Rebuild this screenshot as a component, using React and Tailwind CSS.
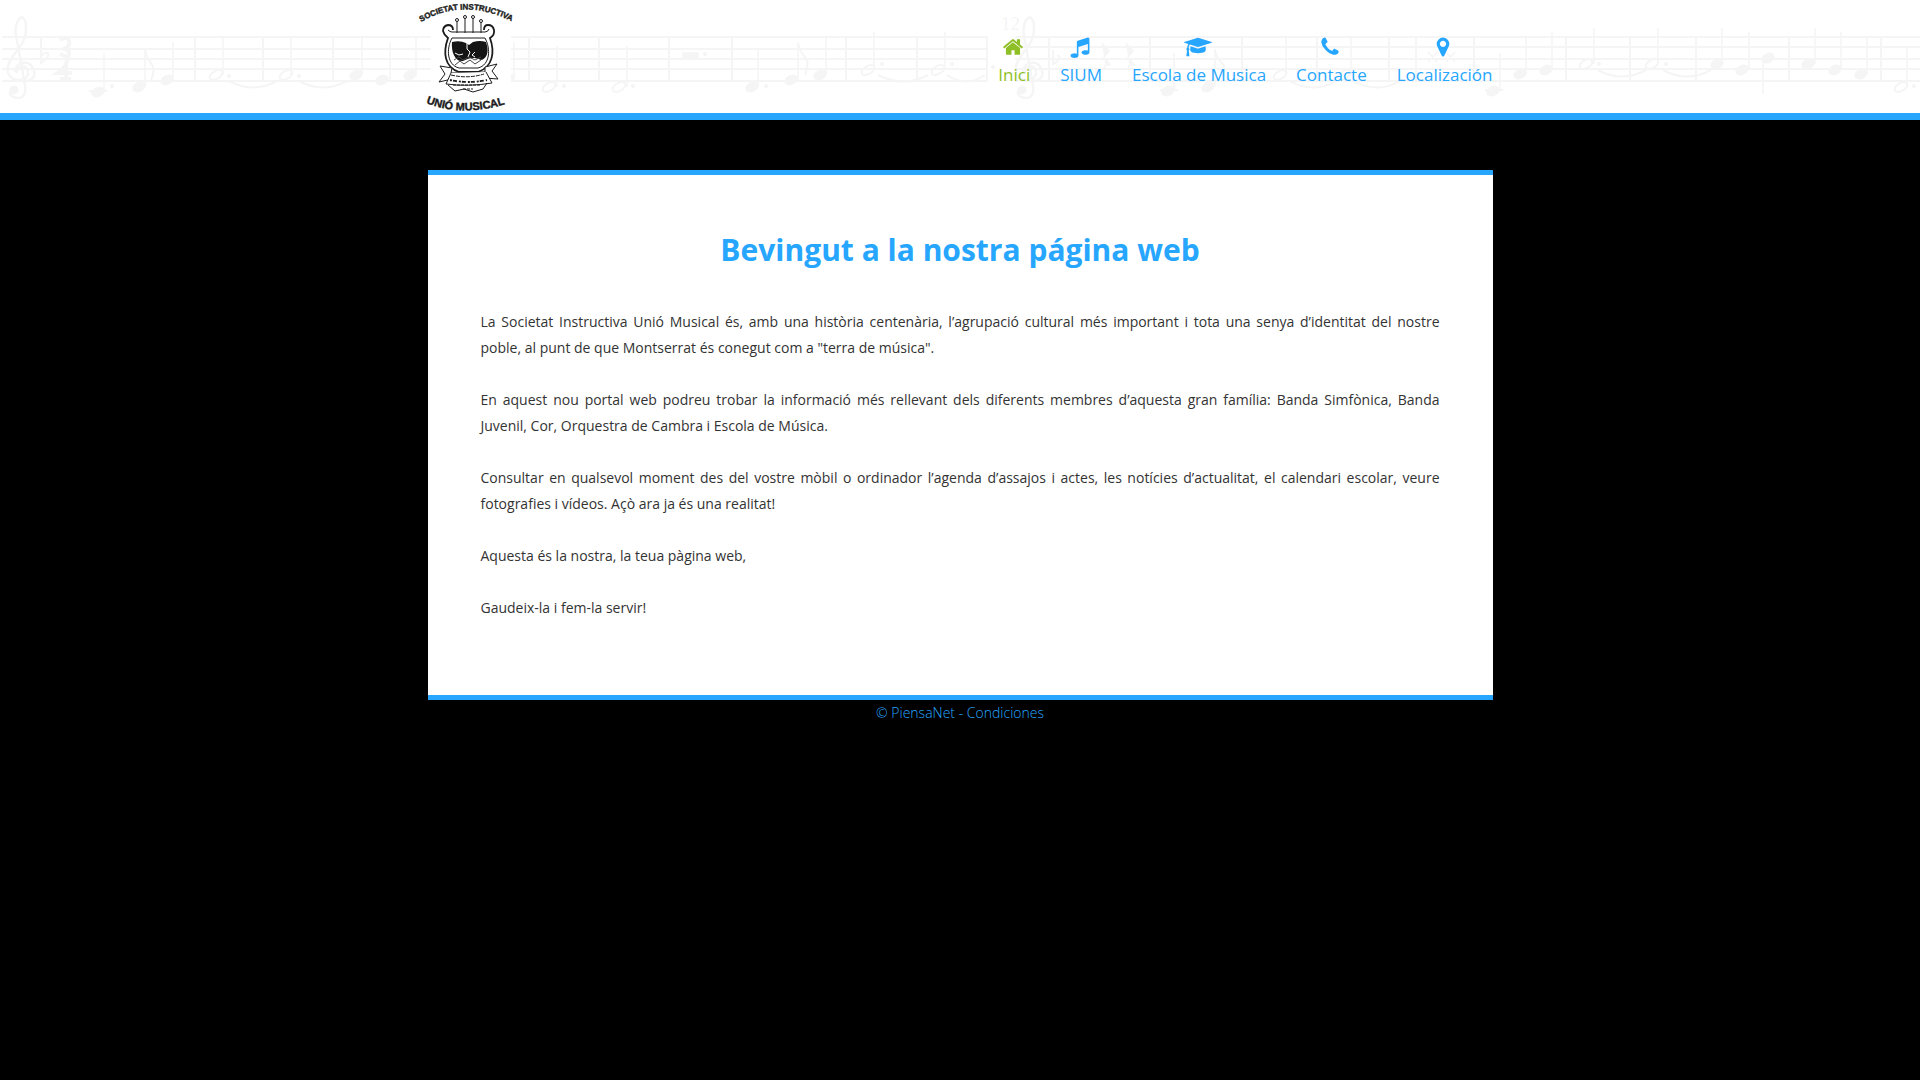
const ICONS = {
  home: {
    box: '0 0 1792 1792',
    size: 'w-[22px]',
    d: 'M1472 992v480q0 26-19 45t-45 19h-384v-384h-256v384h-384q-26 0-45-19t-19-45v-480q0-1 .5-3t.5-3l575-474 575 474q1 2 1 6zm223-69l-62 74q-8 9-21 11h-3q-13 0-21-7l-692-577-692 577q-12 8-24 7-13-2-21-11l-62-74q-8-10-7-23.5t11-21.5l719-599q32-26 76-26t76 26l244 204v-195q0-14 9-23t23-9h192q14 0 23 9t9 23v408l219 182q10 8 11 21.5t-7 23.5z',
  },
  music: {
    box: '0 0 1792 1792',
    size: 'w-[22px]',
    d: 'M1664 224v1120q0 50-34 89t-86 60.5-103.5 32-96.5 10.5-96.5-10.5-103.5-32-86-60.5-34-89 34-89 86-60.5 103.5-32 96.5-10.5q105 0 192 39v-537l-768 237v709q0 50-34 89t-86 60.5-103.5 32-96.5 10.5-96.5-10.5-103.5-32-86-60.5-34-89 34-89 86-60.5 103.5-32 96.5-10.5q105 0 192 39v-967q0-31 19-56.5t49-35.5l832-256q12-4 28-4 40 0 68 28t28 68z',
  },
  cap: {
    box: '0 0 2304 1792',
    size: 'w-7',
    d: 'M1774 836l18 316q4 69-82 128t-235 93.5-323 34.5-323-34.5-235-93.5-82-128l18-316 574 181q22 7 48 7t48-7zm530-324q0 23-22 31l-1120 352q-4 1-10 1t-10-1l-652-206q-43 34-71 111.5t-34 178.5q63 36 63 109 0 69-58 107l58 433q2 14-8 25-9 11-24 11h-192q-15 0-24-11-10-11-8-25l58-433q-58-38-58-107 0-73 65-111 11-207 98-330l-333-104q-22-8-22-31t22-31l1120-352q4-1 10-1t10 1l1120 352q22 8 22 31z',
  },
  phone: {
    box: '0 0 1792 1792',
    size: 'w-[22px]',
    d: 'M1600 1240q0 27-10 70.5t-21 68.5q-21 50-122 106-94 51-186 51-27 0-52.5-3.5t-57.5-12.5-47.5-14.5-55.5-20.5-49-18q-98-35-175-83-128-79-264.5-215.5t-215.5-264.5q-48-77-83-175-3-9-18-49t-20.5-55.5-14.5-47.5-12.5-57.5-3.5-52.5q0-92 51-186 56-101 106-122 25-11 68.5-21t70.5-10q14 0 21 3 18 6 53 76 11 19 30 54t35 63.5 31 53.5q3 4 17.5 25t21.5 35.5 7 28.5q0 20-28.5 50t-62 55-62 53-28.5 46q0 9 5 22.5t8.5 20.5 14 24 11.5 19q76 137 174 235t235 174q2 1 19 11.5t24 14 20.5 8.5 22.5 5q18 0 46-28.5t53-62 55-62 50-28.5q14 0 28.5 7t35.5 21.5 25 17.5q25 15 53.5 31t63.5 35 54 30q70 35 76 53 3 7 3 21z',
  },
  marker: {
    box: '0 0 1792 1792',
    size: 'w-[22px]',
    d: 'M1152 640q0-106-75-181t-181-75-181 75-75 181 75 181 181 75 181-75 75-181zm256 0q0 109-33 179l-364 774q-16 33-47.5 52t-67.5 19-67.5-19-46.5-52l-365-774q-33-70-33-179 0-212 150-362t362-150 362 150 150 362z',
  },
};

const NAV = [
  { label: 'Inici', icon: 'home', active: true },
  { label: 'SIUM', icon: 'music' },
  { label: 'Escola de Musica', icon: 'cap' },
  { label: 'Contacte', icon: 'phone' },
  { label: 'Localización', icon: 'marker' },
];

const PARAGRAPHS = [
  'La Societat Instructiva Unió Musical és, amb una història centenària, l’agrupació cultural més important i tota una senya d’identitat del nostre poble, al punt de que Montserrat és conegut com a "terra de música".',
  'En aquest nou portal web podreu trobar la informació més rellevant dels diferents membres d’aquesta gran família: Banda Simfònica, Banda Juvenil, Cor, Orquestra de Cambra i Escola de Música.',
  'Consultar en qualsevol moment des del vostre mòbil o ordinador l’agenda d’assajos i actes, les notícies d’actualitat, el calendari escolar, veure fotografies i vídeos. Açò ara ja és una realitat!',
  'Aquesta és la nostra, la teua pàgina web,',
  'Gaudeix-la i fem-la servir!',
];

/* Notes: [head x, head y, stem x, stem end y] */
const QUARTERS = [
  [98, 92, 104, 53], [139, 87, 145, 49], [167, 80, 173, 42], [356, 75, 362, 37],
  [382, 80, 390, 42], [410, 75, 416, 37], [508, 79, 514, 42], [752, 87, 758, 49],
  [791, 80, 798, 42], [820, 75, 826, 37], [1168, 91, 1174, 53], [1208, 87, 1215, 49],
  [1493, 91, 1500, 53], [1520, 74, 1526, 37], [1546, 70, 1552, 32], [1717, 64, 1722, 28],
  [1742, 70, 1749, 32], [1768, 58, 1763, 94], [1808, 64, 1815, 28], [1835, 70, 1841, 32],
  [1861, 74, 1867, 37],
];
const HALVES = [
  [216, 75, 223, 37], [286, 75, 291, 37], [549, 87, 557, 46], [619, 87, 627, 46],
  [868, 70, 874, 32], [938, 70, 945, 32], [1280, 75, 1286, 37], [1344, 75, 1351, 37],
  [1586, 64, 1594, 28], [1652, 64, 1658, 28], [1901, 87, 1907, 47],
];
const DOTS = [
  [112, 86], [229, 76], [299, 76], [564, 86], [633, 86], [705, 54], [766, 86], [882, 64],
  [952, 64], [993, 67], [1599, 64], [1666, 64], [1914, 86],
];
const BARS = [195, 263, 333, 529, 599, 669, 732, 846, 917, 987, 1049, 1150, 1242, 1317, 1389, 1416, 1474, 1566, 1630, 1696, 1789, 1881];
const TIES = [
  [229, 81, 48], [299, 81, 48], [878, 75, 50], [947, 75, 38], [1290, 81, 46], [1354, 81, 46],
  [1598, 70, 48], [1663, 70, 48],
];

function Clef({ x }) {
  return (
    <path
      transform={`translate(${x} 0)`}
      d="M-4 73c-1-6 7-9 10-4 3 6-1 11-8 11-8 0-13-6-11-14 3-13 19-20 18-39 0-8-4-12-7-8-5 6-4 14-2 22l8 44c1 8-1 13-7 13-5 0-9-3-8-7M-6 72c0-10 13-13 18-4 4 8-1 13-8 13"
      fill="none"
      strokeWidth="2.4"
    />
  );
}

function Score() {
  return (
    <svg
      aria-hidden="true"
      className="absolute left-0 top-0"
      width="1920"
      height="113"
      viewBox="0 0 1920 113"
      fill="#f5f5f5"
      stroke="#f5f5f5"
    >
      <path d="M2 37H987M2 49H987M2 59H987M2 69H987M2 81H987M1015 37H1920M1015 47H1920M1015 59H1920M1015 69H1920M1015 81H1920" strokeWidth="2" />
      <Clef x={21} />
      <Clef x={1029} />
      <circle cx="14" cy="90" r="4" />
      <circle cx="1022" cy="90" r="4" />
      <path d="M41 38v25c9-5 9-12 4-10l-4 3M1053 50v14c8-4 8-9 4-8" fill="none" strokeWidth="2" />
      <path d="M60 40q7-5 9 1t-6 8q9 1 5 8l-8-3M68 57q-1 10-10 16h14M66 62v17M60 79h11" fill="none" strokeWidth="4" />
      {BARS.map((x) => <path key={x} d={`M${x} 37V81`} strokeWidth="2" />)}
      {[...QUARTERS, ...HALVES].map(([x, y, sx, sy]) => (
        <path key={`${sx}-${sy}`} d={`M${sx} ${y}V${sy}`} strokeWidth="1.6" />
      ))}
      {QUARTERS.map(([x, y]) => (
        <ellipse key={x} cx={x} cy={y} rx="7" ry="5" transform={`rotate(-25 ${x} ${y})`} stroke="none" />
      ))}
      {HALVES.map(([x, y]) => (
        <ellipse key={x} cx={x} cy={y} rx="7" ry="4" transform={`rotate(-30 ${x} ${y})`} fill="none" strokeWidth="2" />
      ))}
      {DOTS.map(([x, y]) => <circle key={x} cx={x} cy={y} r="1.6" />)}
      {TIES.map(([x, y, w]) => (
        <path key={x} d={`M${x} ${y}q${w / 2} 13 ${w} 0`} fill="none" strokeWidth="2" />
      ))}
      <path d="M89 91h18M1160 90h18M1485 90h18" strokeWidth="2" />
      <path d="M145 49q1 8 6 14t0 17M798 44q2 8 7 13t0 18M1215 51q2 8 7 12t0 14" fill="none" strokeWidth="2" />
      <path d="M683 53h15v5h-15zM1102 43l7 8-5 6 6 8q-8-1-4 5M1126 43l7 8-5 6 6 8q-8-1-4 5M1428 52l9 10m0-10-9 10M1446 52l9 10m0-10-9 10" strokeWidth="1.5" />
      <text x="1001" y="30" fontFamily="Liberation Serif, serif" fontSize="19" stroke="none">12</text>
    </svg>
  );
}

function Logo() {
  return (
    <svg
      role="img"
      aria-label="Societat Instructiva Unió Musical"
      className="overflow-visible"
      width="95"
      height="113"
      viewBox="0 0 95 113"
      fill="none"
      stroke="#1c1c1c"
    >
      <rect x="12" y="20" width="80" height="75" fill="#fff" stroke="none" />
      <path id="arc-top" d="M2 22Q47 -4 98 24" stroke="none" />
      <path id="arc-bottom" d="M7 103Q44 118 90 103" stroke="none" />
      <g fill="#1c1c1c" strokeWidth="0.4" fontFamily="Liberation Sans, sans-serif" fontWeight="700">
        <text fontSize="8"><textPath href="#arc-top">SOCIETAT INSTRUCTIVA</textPath></text>
        <text fontSize="11"><textPath href="#arc-bottom">UNIÓ MUSICAL</textPath></text>
      </g>
      <path d="M38 21v12M46 18v15M54 18v15M62 22v11" strokeWidth="1" />
      <g fill="#fff" strokeWidth="1">
        <circle cx="38" cy="20" r="1.5" />
        <circle cx="46" cy="17" r="1.5" />
        <circle cx="54" cy="17" r="1.5" />
        <circle cx="62" cy="21" r="1.5" />
      </g>
      <path d="M34 30q0-5-5-5-5 1-5 6 1 4 5 7c-5 14-4 29 11 34h19c15-5 17-20 12-34q5-3 4-8-1-5-6-5-4 0-4 5" strokeWidth="1.8" />
      <path d="M29 30q2 2 4 2h33q3 0 4-3M33 38c-6 11-5 27 7 30h19c12-3 13-19 7-30z" strokeWidth="1" />
      <path d="M33 42q8-2 14 1l3 2 4-3q7-2 13 0c4 11 0 17-5 18-9-4-13-1-18 1-8 1-12-9-11-19z" fill="#151515" stroke="none" />
      <path d="M48 43v6l3 3-2 5M36 53l4 2 4-1M56 52l-3 3 3 2" stroke="#fff" strokeWidth="1" />
      <path d="M35 60l5-3 4 3 6-3 6 3 6-3M36 65l5-4 4 3 6-4 5 4 6-4" stroke="#444" strokeWidth="1" />
      <path d="M21 66l12 2-1 5 34-1V67l12-3-5 7 6 8-13-1-33 1-13 3 6-8z" fill="#fff" strokeWidth="1" />
      <path d="M32 73l-5 11q22 3 46-1l-6-11M29 85l7 6 9-2 9 3 10-3 4-6" fill="#fff" strokeWidth="1" />
      <path d="M32 75q17 4 33-1" strokeWidth="1" strokeDasharray="4 1" />
      <path d="M31 80q18 4 37 0" strokeWidth="1.8" strokeDasharray="2 1 4 2" />
      <path d="M34 85h28M44 89h10" strokeWidth="1" strokeDasharray="3 1" />
    </svg>
  );
}

function NavItem({ label, icon, active }) {
  const { box, size, d } = ICONS[icon];
  return (
    <a
      href="#"
      className={`flex flex-col items-center gap-[5px] text-[17px] leading-6 ${active ? 'text-[#8fbf26]' : 'text-[#26a6fe]'}`}
    >
      <svg aria-hidden="true" viewBox={box} className={`mr-[3px] h-[22px] ${size}`} fill="currentColor">
        <path d={d} />
      </svg>
      {label}
    </a>
  );
}

export default function App() {
  return (
    <div className="min-h-screen bg-black font-['Open_Sans',sans-serif]">
      <header className="relative overflow-hidden border-b-[7px] border-[#26a6fe] bg-white">
        <Score />
        <div className="relative mx-auto flex max-w-[1083px] items-start justify-between pr-[9px]">
          <a href="#">
            <Logo />
          </a>
          <nav className="flex gap-[30px] pt-9">
            {NAV.map((item) => <NavItem key={item.label} {...item} />)}
          </nav>
        </div>
      </header>
      <main className="mx-auto mt-[50px] max-w-[1065px] border-y-[5px] border-[#26a6fe] bg-white px-[53px] pb-[74px] pt-[55px]">
        <h1 className="text-center text-[30px] font-bold leading-10 text-[#26a6fe]">
          Bevingut a la nostra página web
        </h1>
        <div className="mt-[39px] flex flex-col gap-[26px] text-justify text-sm leading-[26px] text-[#333]">
          {PARAGRAPHS.map((text) => <p key={text}>{text}</p>)}
        </div>
      </main>
      <footer className="py-[3px] text-center text-sm font-light text-[#26a6fe]">
        <a href="#">© PiensaNet</a> - <a href="#">Condiciones</a>
      </footer>
    </div>
  );
}
